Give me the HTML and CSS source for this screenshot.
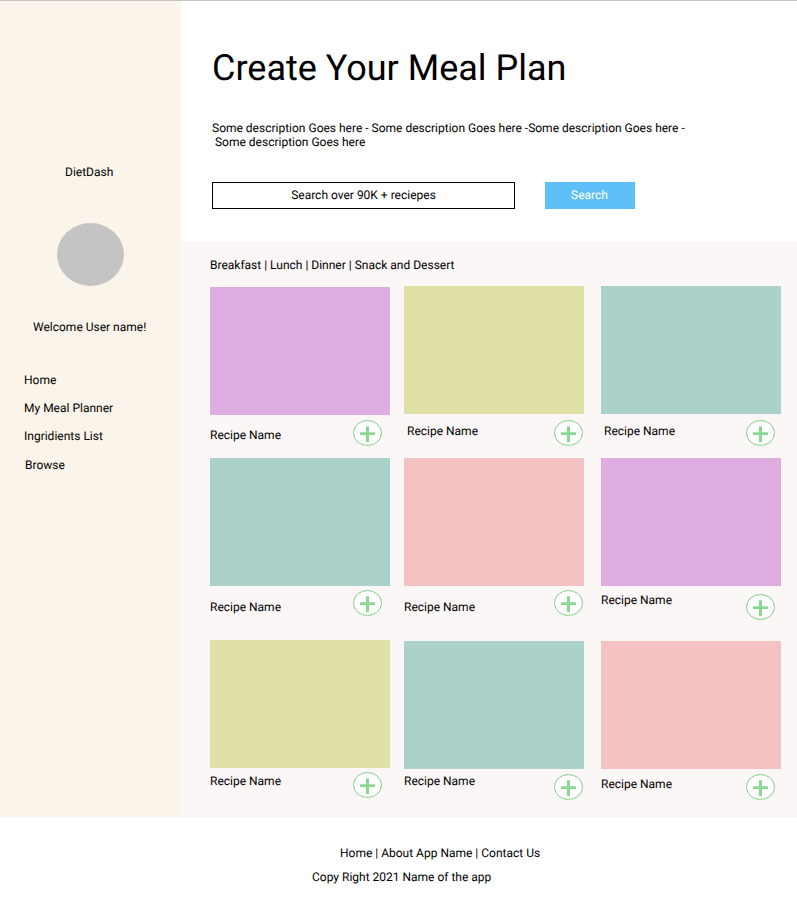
FILE: index.html
```html
<!DOCTYPE html>
<html lang="en">
<head>
<meta charset="utf-8">
<title>Create Your Meal Plan</title>
<link rel="stylesheet" href="styles.css">
</head>
<body>
<svg class="sprite" aria-hidden="true">
  <symbol id="add" viewBox="0 0 29 26">
    <ellipse cx="14.5" cy="13" rx="14" ry="12.5" fill="#fff" stroke="#7fd187"/>
    <path d="M7 12.2h15v2.8H7zM13 6.2h3v15.8h-3z" fill="#8bd891"/>
  </symbol>
</svg>
<div class="page">
  <aside class="sidebar">
    <div class="brand">DietDash</div>
    <div class="avatar"></div>
    <div class="welcome">Welcome User name!</div>
    <nav class="menu">
      <a>Home</a>
      <a>My Meal Planner</a>
      <a>Ingridients List</a>
      <a class="browse">Browse</a>
    </nav>
  </aside>
  <main class="main">
    <header class="hero">
      <h1>Create Your Meal Plan</h1>
      <p class="description">Some description Goes here - Some description Goes here -Some description Goes here -
 Some description Goes here</p>
      <form class="search">
        <div class="field">Search over 90K + reciepes</div>
        <div class="button">Search</div>
      </form>
    </header>
    <section class="recipes">
      <div class="filters">Breakfast | Lunch | Dinner | Snack and Dessert</div>
      <div class="grid">
        <article class="card lowered">
          <div class="photo purple"></div>
          <div class="info"><span class="name drop-13">Recipe Name</span><svg class="add drop-5"><use href="#add"/></svg></div>
        </article>
        <article class="card">
          <div class="photo olive"></div>
          <div class="info middle"><span class="name indent drop-10">Recipe Name</span><svg class="add drop-6"><use href="#add"/></svg></div>
        </article>
        <article class="card">
          <div class="photo teal"></div>
          <div class="info last"><span class="name indent drop-10">Recipe Name</span><svg class="add drop-6"><use href="#add"/></svg></div>
        </article>
        <article class="card">
          <div class="photo teal"></div>
          <div class="info"><span class="name drop-14">Recipe Name</span><svg class="add drop-4"><use href="#add"/></svg></div>
        </article>
        <article class="card">
          <div class="photo pink"></div>
          <div class="info middle"><span class="name drop-14">Recipe Name</span><svg class="add drop-4"><use href="#add"/></svg></div>
        </article>
        <article class="card">
          <div class="photo purple"></div>
          <div class="info last"><span class="name drop-7">Recipe Name</span><svg class="add drop-8"><use href="#add"/></svg></div>
        </article>
        <article class="card">
          <div class="photo olive"></div>
          <div class="info"><span class="name drop-6">Recipe Name</span><svg class="add drop-4"><use href="#add"/></svg></div>
        </article>
        <article class="card lowered">
          <div class="photo teal"></div>
          <div class="info middle"><span class="name drop-5">Recipe Name</span><svg class="add drop-5"><use href="#add"/></svg></div>
        </article>
        <article class="card lowered">
          <div class="photo pink"></div>
          <div class="info last"><span class="name drop-8">Recipe Name</span><svg class="add drop-5"><use href="#add"/></svg></div>
        </article>
      </div>
    </section>
  </main>
</div>
<footer class="footer">
  <div class="links">Home | About App Name | Contact Us</div>
  <div class="copyright">Copy Right 2021 Name of the app</div>
</footer>
</body>
</html>
```
FILE: styles.css
```css
* { box-sizing: border-box; }

body {
  margin: 0;
  border-top: 1px solid #c4c4c4;
  background: #fff;
  color: #000;
  font: 12px/14px Roboto, "Liberation Sans", sans-serif;
  text-rendering: geometricPrecision;
}

.sprite { display: none; }

.page {
  display: grid;
  grid-template-columns: 181px 1fr;
  height: 816px;
}

.sidebar {
  display: flex;
  flex-direction: column;
  padding-top: 164px;
  background: #fbf4ea;
}

.brand { padding-left: 65px; }

.avatar {
  width: 67px;
  height: 63px;
  margin: 44px 0 34px 57px;
  border-radius: 50%;
  background: #c4c4c4;
}

.welcome { padding-left: 33px; }

.menu {
  display: flex;
  flex-direction: column;
  gap: 14px;
  margin: 39px 0 0 24px;
}

.browse { margin: 1px 0 0 1px; }

.hero {
  height: 240px;
  padding: 46px 0 0 31px;
}

h1 {
  margin: 0;
  font-size: 36px;
  font-weight: 400;
  line-height: 42px;
}

.description {
  margin: 32px 0 0;
  white-space: pre;
}

.search {
  display: flex;
  gap: 30px;
  margin: 33px 0 0;
}

.field,
.button {
  height: 27px;
  text-align: center;
}

.field {
  width: 303px;
  padding-top: 5px;
  border: 1px solid #000;
}

.button {
  width: 90px;
  padding: 6px 1px 0 0;
  background: #5fbff9;
  color: #fff;
}

.recipes {
  height: 576px;
  padding: 17px 0 0 29px;
  background: #fbf7f6;
}

.grid {
  display: grid;
  grid-template-columns: 194px 197px 180px;
  grid-template-rows: 172px 182px 177px;
  margin-top: 14px;
}

.card { width: 180px; }
.lowered { padding-top: 1px; }

.photo { height: 128px; }
.purple { background: #dfade0; }
.olive { background: #e0e1a7; }
.teal { background: #abd2ca; }
.pink { background: #f4c2c3; }

.info {
  display: flex;
  align-items: flex-start;
  justify-content: space-between;
  padding-right: 8px;
}

.middle { padding-right: 1px; }
.last { padding-right: 6px; }

.indent { padding-left: 3px; }

.add {
  width: 29px;
  height: 26px;
}

.drop-4 { margin-top: 4px; }
.drop-5 { margin-top: 5px; }
.drop-6 { margin-top: 6px; }
.drop-7 { margin-top: 7px; }
.drop-8 { margin-top: 8px; }
.drop-10 { margin-top: 10px; }
.drop-13 { margin-top: 13px; }
.drop-14 { margin-top: 14px; }

.footer {
  display: flex;
  flex-direction: column;
  gap: 10px;
  padding-top: 29px;
}

.links { padding-left: 340px; }
.copyright { padding-left: 312px; }
```
